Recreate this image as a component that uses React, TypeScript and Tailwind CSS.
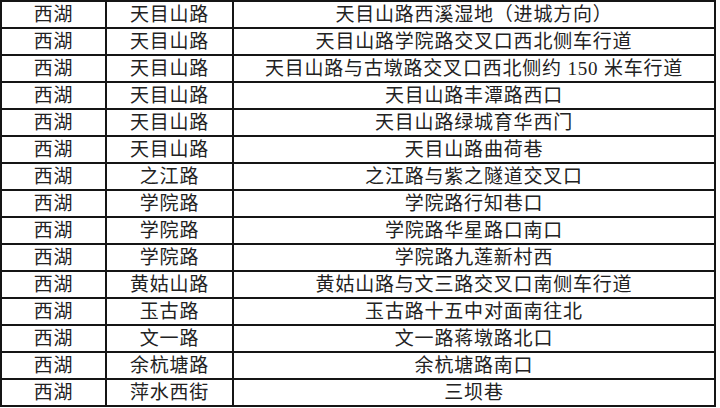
import React from "react";

const rows: [string, string, string][] = [
  ["西湖", "天目山路", "天目山路西溪湿地（进城方向）"],
  ["西湖", "天目山路", "天目山路学院路交叉口西北侧车行道"],
  ["西湖", "天目山路", "天目山路与古墩路交叉口西北侧约 150 米车行道"],
  ["西湖", "天目山路", "天目山路丰潭路西口"],
  ["西湖", "天目山路", "天目山路绿城育华西门"],
  ["西湖", "天目山路", "天目山路曲荷巷"],
  ["西湖", "之江路", "之江路与紫之隧道交叉口"],
  ["西湖", "学院路", "学院路行知巷口"],
  ["西湖", "学院路", "学院路华星路口南口"],
  ["西湖", "学院路", "学院路九莲新村西"],
  ["西湖", "黄姑山路", "黄姑山路与文三路交叉口南侧车行道"],
  ["西湖", "玉古路", "玉古路十五中对面南往北"],
  ["西湖", "文一路", "文一路蒋墩路北口"],
  ["西湖", "余杭塘路", "余杭塘路南口"],
  ["西湖", "萍水西街", "三坝巷"],
];

export default function App() {
  return (
    <div
      className="w-[720px] h-[408px] bg-white overflow-hidden"
      style={{ fontFamily: '"Liberation Serif", "Noto Sans CJK SC", serif' }}
    >
      <div className="w-[716px] border-l-2 border-t-2 border-[#151515]">
        {rows.map((r, i) => (
          <div
            key={i}
            className="grid grid-cols-[105px_127px_482px] h-[27px] border-b-2 border-[#151515] text-[19px] leading-none text-[#222] tracking-[0.8px]"
          >
            <div className="border-r-2 border-[#151515] flex items-center justify-center">
              {r[0]}
            </div>
            <div className="border-r-2 border-[#151515] flex items-center justify-center">
              {r[1]}
            </div>
            <div className="border-r-2 border-[#151515] flex items-center justify-center">
              {r[2]}
            </div>
          </div>
        ))}
      </div>
    </div>
  );
}
